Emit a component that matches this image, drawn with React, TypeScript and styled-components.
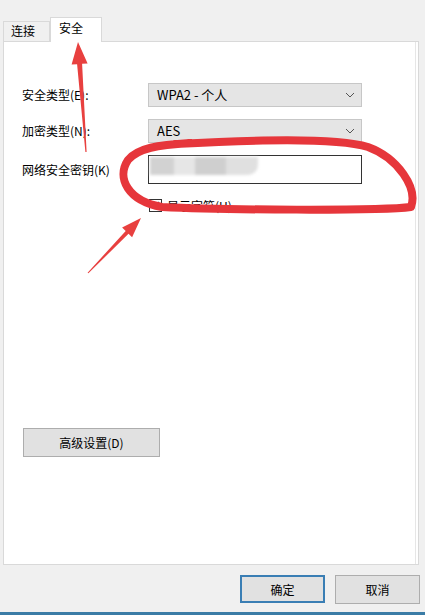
import React from 'react';
import styled, { createGlobalStyle } from 'styled-components';

const GlobalStyle = createGlobalStyle`
  html, body { margin: 0; padding: 0; background: #f0f0f0; }
  body {
    font-family: "Noto Sans CJK SC", "Noto Sans", sans-serif;
    font-size: 12px;
    color: #000;
  }
`;

const Dialog = styled.div`
  position: relative;
  width: 425px;
  height: 615px;
  background: #f0f0f0;
  display: flex;
  flex-direction: column;
  overflow: hidden;
`;

const TabStrip = styled.div`
  display: flex;
  align-items: flex-end;
  height: 41px;
  padding-left: 3px;
`;

const Tab = styled.div<{ $active?: boolean }>`
  box-sizing: border-box;
  height: ${p => (p.$active ? 25 : 20)}px;
  width: ${p => (p.$active ? 52 : 47)}px;
  padding: ${p => (p.$active ? '2px 0 0 8px' : '1px 0 0 7px')};
  background: ${p => (p.$active ? '#fff' : '#f0f0f0')};
  border: 1px solid #d9d9d9;
  border-bottom: none;
  margin-bottom: ${p => (p.$active ? -1 : 0)}px;
  position: relative;
  z-index: ${p => (p.$active ? 2 : 1)};
  line-height: 16px;
`;

const Panel = styled.div`
  box-sizing: border-box;
  margin: 0 6px 0 3px;
  height: 525px;
  background: #fff;
  border: 1px solid #d9d9d9;
  box-shadow: inset -2px 0 0 #fff, inset -3px 0 0 #e6e6e6;
  padding: 41px 0 0 18px;
  display: flex;
  flex-direction: column;
`;

const FieldRow = styled.div<{ $gap: number }>`
  display: flex;
  align-items: center;
  margin-top: ${p => p.$gap}px;
`;

const Label = styled.div`
  width: 126px;
  white-space: nowrap;
`;

const Select = styled.div`
  box-sizing: border-box;
  width: 214px;
  height: 24px;
  background: #e5e5e5;
  border: 1px solid #c7c7c7;
  display: flex;
  align-items: center;
  justify-content: space-between;
  padding: 0 6px 0 8px;
  font-size: 13px;
`;

const KeyInput = styled.div`
  box-sizing: border-box;
  width: 214px;
  height: 29px;
  background: #fff;
  border: 1px solid #333;
  padding: 1px 0 0 1px;
  position: relative;
`;

const Blurred = styled.div`
  width: 108px;
  height: 18px;
  background: linear-gradient(90deg, #d2d2d2 0 22%, #e6e6e6 22% 42%, #cfcfcf 42% 70%, #e0e0e0 70% 100%);
  filter: blur(1.5px);
  border-bottom-right-radius: 10px;
`;

const CheckRow = styled.div`
  display: flex;
  align-items: center;
  gap: 5px;
  margin: 13px 0 0 127px;
`;

const CheckBox = styled.div`
  box-sizing: border-box;
  width: 13px;
  height: 13px;
  border: 1px solid #333;
  background: #fff;
  display: flex;
  align-items: center;
  justify-content: center;
`;

const Button = styled.div<{ $primary?: boolean; $width: number }>`
  box-sizing: border-box;
  width: ${p => p.$width}px;
  height: ${p => (p.$primary ? 28 : 29)}px;
  background: #e1e1e1;
  border: ${p => (p.$primary ? '2px solid #3a7eb4' : '1px solid #adadad')};
  display: flex;
  align-items: center;
  justify-content: center;
  font-size: 12px;
`;

const Advanced = styled.div`
  margin: 214px 0 0 1px;
`;

const Footer = styled.div`
  display: flex;
  justify-content: flex-end;
  gap: 10px;
  padding: 10px 5px 0 0;
  height: 37px;
`;

const BottomLine = styled.div`
  height: 3px;
  background: #3b7ca6;
  margin-top: auto;
`;

const Overlay = styled.svg`
  position: absolute;
  left: 0;
  top: 0;
  pointer-events: none;
`;

const Chevron = () => (
  <svg width="10" height="6" viewBox="0 0 10 6">
    <polyline points="1,1 5,5 9,1" fill="none" stroke="#555" strokeWidth="1" />
  </svg>
);

const App: React.FC = () => {
  return (
    <Dialog>
      <GlobalStyle />
      <TabStrip>
        <Tab>连接</Tab>
        <Tab $active>安全</Tab>
      </TabStrip>
      <Panel>
        <FieldRow $gap={0}>
          <Label>安全类型(E):</Label>
          <Select>WPA2 - 个人<Chevron /></Select>
        </FieldRow>
        <FieldRow $gap={12}>
          <Label>加密类型(N):</Label>
          <Select>AES<Chevron /></Select>
        </FieldRow>
        <FieldRow $gap={12}>
          <Label>网络安全密钥(K)</Label>
          <KeyInput><Blurred /></KeyInput>
        </FieldRow>
        <CheckRow>
          <CheckBox>
            <svg width="9" height="8" viewBox="0 0 9 8">
              <polyline points="1,4 3.5,6.5 8,1" fill="none" stroke="#222" strokeWidth="1.2" />
            </svg>
          </CheckBox>
          <span>显示字符(H)</span>
        </CheckRow>
        <Advanced>
          <Button $width={137}>高级设置(D)</Button>
        </Advanced>
      </Panel>
      <Footer>
        <Button $primary $width={85}>确定</Button>
        <Button $width={85}>取消</Button>
      </Footer>
      <BottomLine />

      {/* red annotations drawn over the screenshot */}
      <Overlay width="425" height="615" viewBox="0 0 425 615">
        <path
          d="M 175 144 C 250 140, 335 137, 368 147 C 398 158, 418 188, 411 207 C 380 211, 220 210, 162 207 C 128 201, 116 178, 128 160 C 138 148, 158 145, 190 143"
          fill="none"
          stroke="#e6363b"
          strokeWidth="8"
          strokeLinecap="round"
          strokeLinejoin="round"
        />
        <polygon
          points="78,42 87.6,63.4 82.1,63.8 86.6,152 85.4,152 77.1,64.2 71.6,64.6"
          fill="#e8403f"
        />
        <polygon
          points="141,218 132.1,237.3 128.5,233.8 88.4,273.3 87.6,272.7 125.7,231 122.1,227.5"
          fill="#e8403f"
        />
      </Overlay>
    </Dialog>
  );
};

export default App;
